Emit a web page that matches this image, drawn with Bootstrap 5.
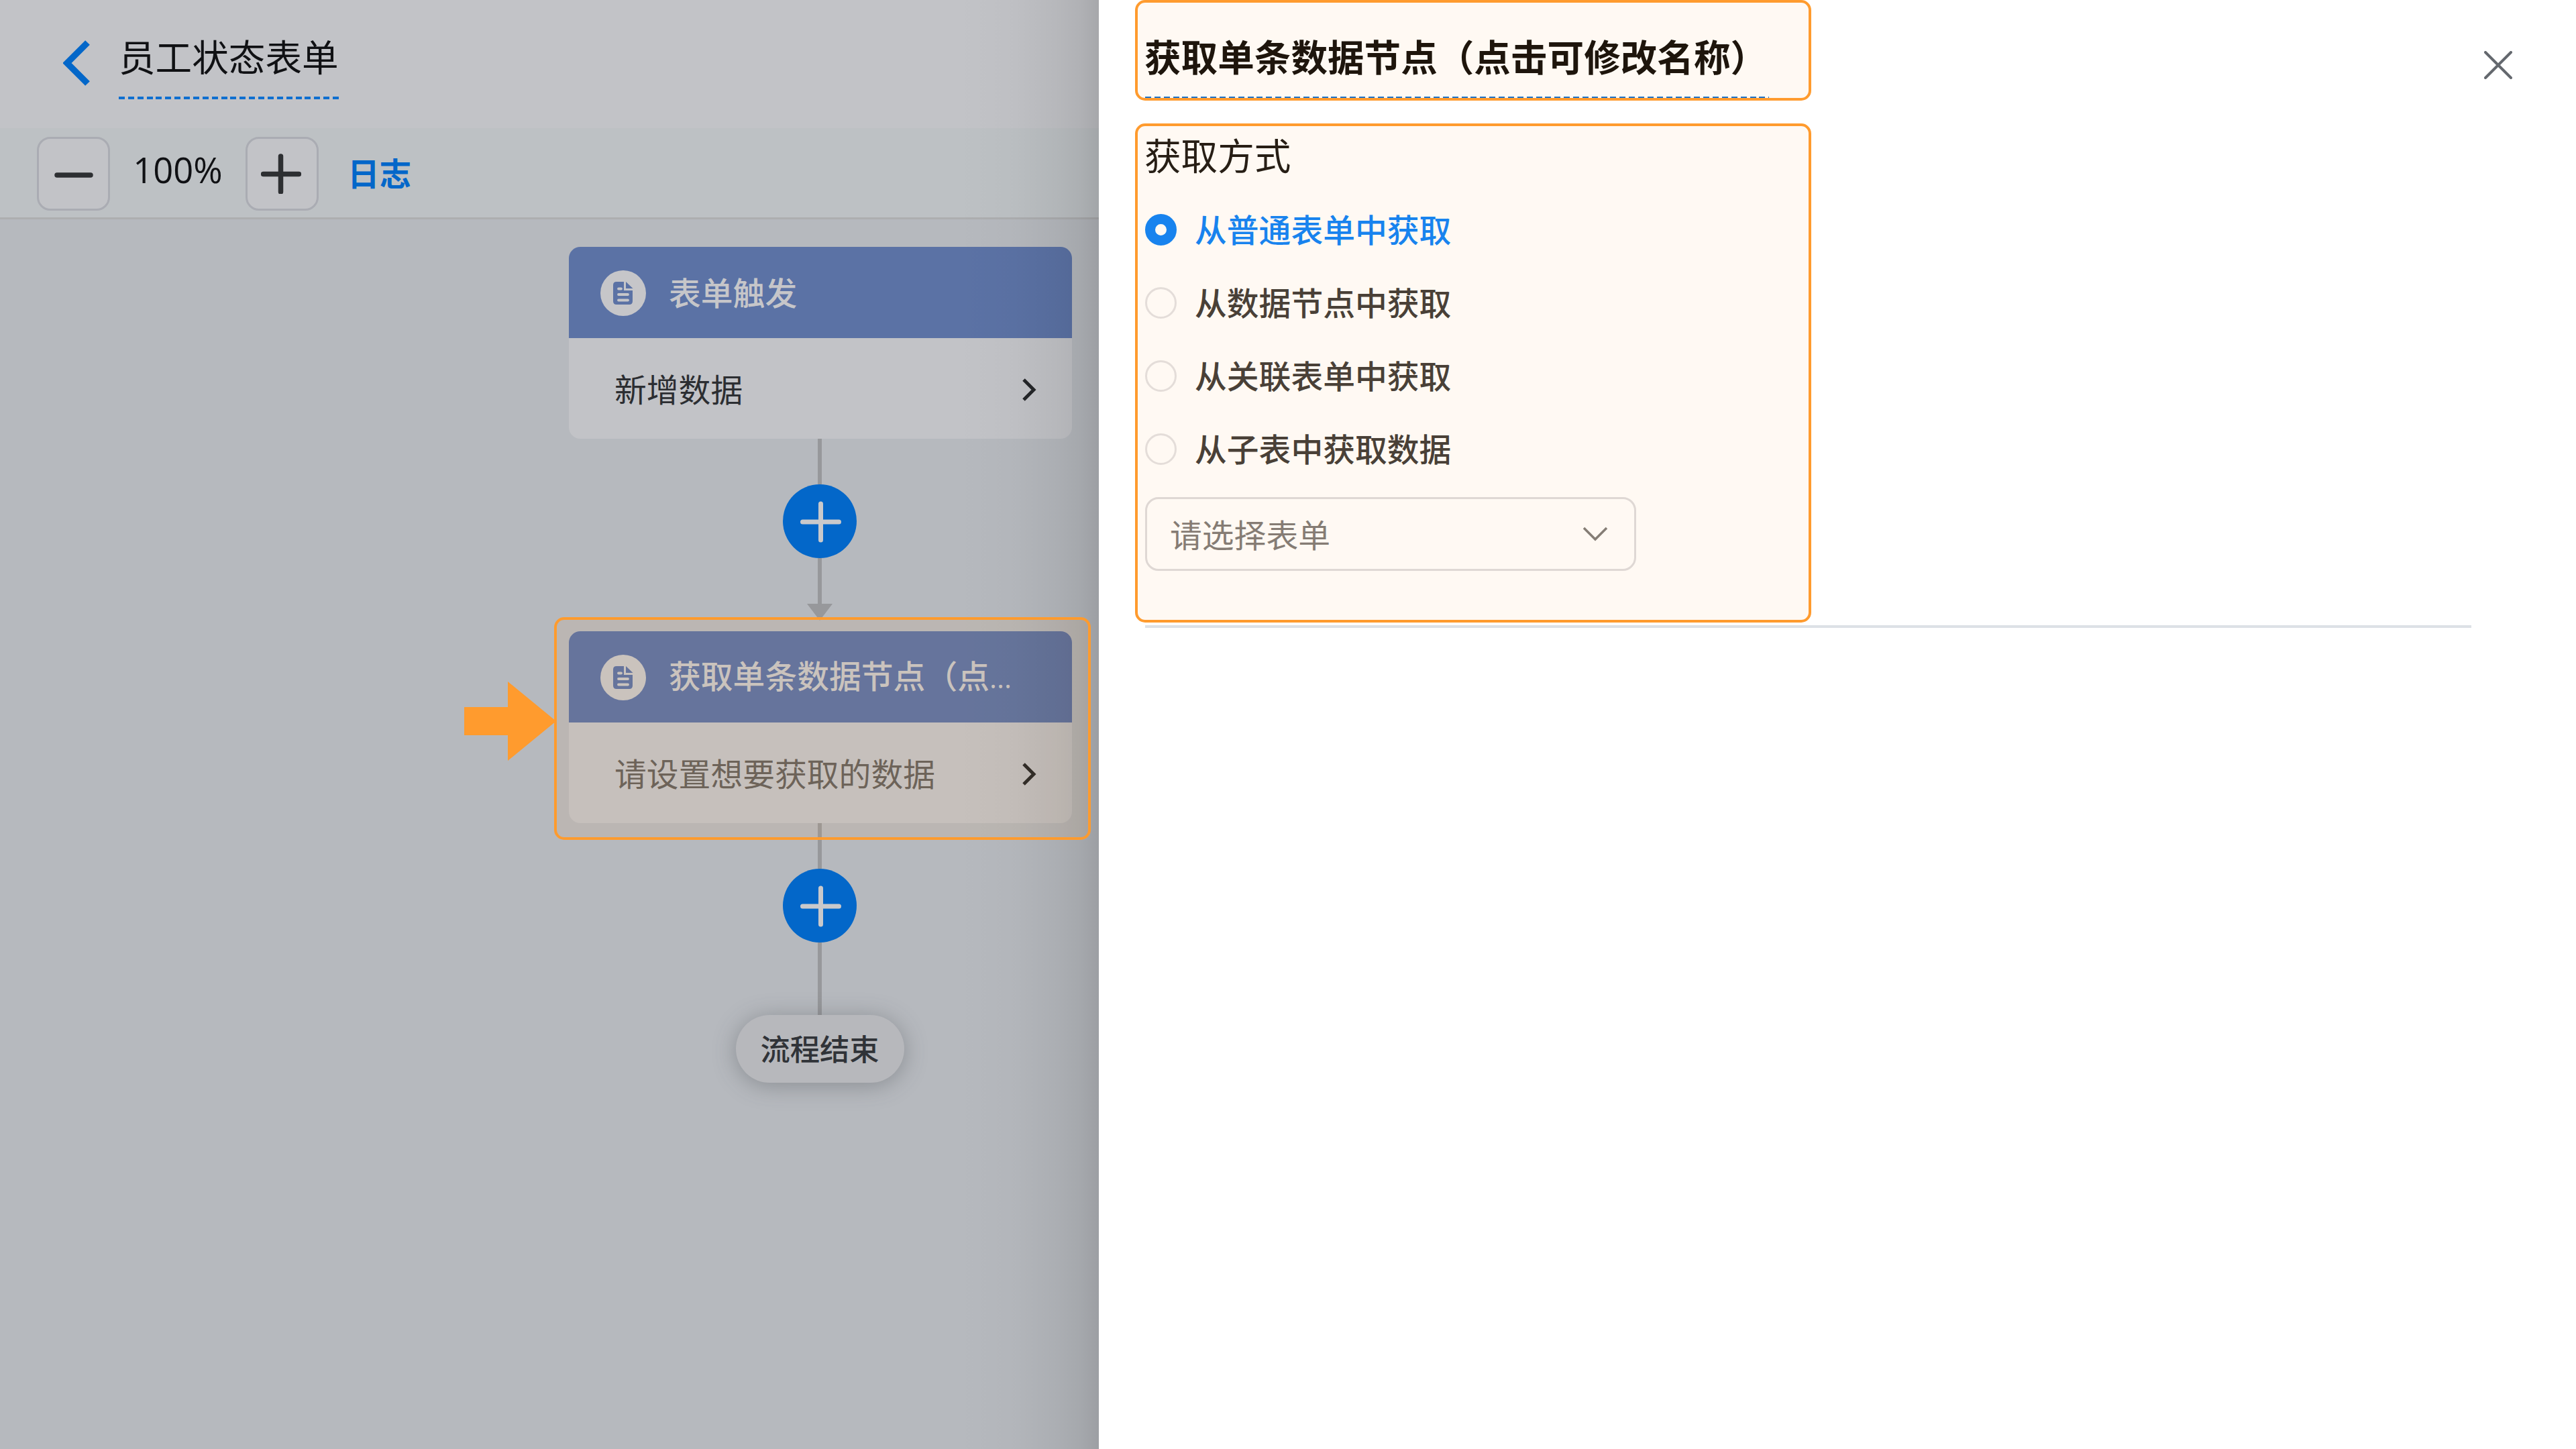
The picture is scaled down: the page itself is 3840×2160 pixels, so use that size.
<!DOCTYPE html>
<html lang="zh-CN">
<head>
<meta charset="utf-8">
<title>员工状态表单</title>
<link href="https://cdn.jsdelivr.net/npm/bootstrap@5.3.0/dist/css/bootstrap.min.css" rel="stylesheet">
<style>
  body { font-family: "Noto Sans CJK SC", sans-serif; font-size: 48px; line-height: 1.5; color: #1a1714; background: #fff; }
  svg { display: block; flex: none; }
  .workspace { width: 3840px; height: 2160px; }
  .flow-pane { width: 1638px; background: #b6b9be; }
  .flow-pane::after { content: ""; position: absolute; top: 0; right: 0; bottom: 0; width: 210px; pointer-events: none;
    background: linear-gradient(to right, rgba(0,0,0,0), rgba(0,0,0,.02) 40%, rgba(0,0,0,.06) 70%, rgba(0,0,0,.09) 86%, rgba(0,0,0,.14)); }
  .top-head { height: 191px; background: #c2c3c7; padding: 43px 0 0 94px; }
  .editable { font-size: 54.6px; line-height: 80px; height: 105px; padding-bottom: 25px;
    background: repeating-linear-gradient(to right, #0f6fd0 0 9px, transparent 9px 13.87px) left bottom / 100% 4px no-repeat; }
  .top-head .editable { width: 328px; margin-left: 43px; color: #101114; }
  .tool-row { height: 136px; background: #bdc1c4; border-bottom: 3px solid #adaeb0; padding: 13px 0 0 55px; }
  .zoom-btn { width: 109px; height: 110px; border: 3px solid #aaacb3; border-radius: 20px; background: #c2c3c7; padding: 0; }
  .zoom-value { width: 202px; font-family: "Open Sans", sans-serif; font-size: 52.5px; line-height: 98px; color: #101114; }
  .zoom-in-icon { margin-left: -3px; }
  .log-link { margin-left: 43px; font-size: 47.6px; line-height: 106px; font-weight: 700; color: #0367c9; text-decoration: none; }
  .flow-col { width: 750px; margin-left: 848px; padding-top: 41px; }
  .node { width: 750px; height: 286px; border: 0; border-radius: 17px; background: #c2c3c7; overflow: hidden; }
  .node-head { height: 136px; background: #5b72a5; color: #c6c6c9; padding: 2px 0 0 47px; font-weight: 500; }
  .node-head span { margin-left: 34px; line-height: 128px; margin-top: -4px; font-size: 47.8px; }
  .node-head i { font-family: "Open Sans", sans-serif; font-style: normal; font-size: 42px; }
  .node-body { height: 150px; padding: 0 50px 0 68px; color: #2c2e32; line-height: 146px; font-size: 47.8px; }
  .node-body svg { margin-top: 4px; }
  .node-body.hint { color: #625f5d; }
  .wire { width: 6px; background: #97989b; margin-left: -2px; }
  .add-node { width: 110px; height: 110px; border-radius: 50%; background: #0367c9; margin-left: -2px; }
  .arrow-tip { width: 0; height: 0; border: solid transparent; border-width: 25px 19px 0; border-top-color: #97989b; margin-left: -2px; }
  .flow-end { width: 251px; height: 101px; border-radius: 51px; background: #b7b8bc; color: #303338; font-size: 44.3px; font-weight: 500; line-height: 99px; margin-left: -2px; box-shadow: 0 4px 34px rgba(70,74,80,.4); }
  .callout { position: absolute; border: 4px solid #ff9b2e; border-radius: 15px; background: rgba(255,155,46,.06); pointer-events: none; }
  .callout-node { left: 826px; top: 920px; width: 800px; height: 332px; background: rgba(255,155,46,.07); }
  .callout-name { left: 54px; top: 0; width: 1008px; height: 150px; }
  .callout-mode { left: 54px; top: 184px; width: 1008px; height: 744px; }
  .pointer { position: absolute; left: 692px; top: 1016px; }
  .side-panel { background: #fff; padding: 43px 95px 0 69px; }
  .close-x { margin-top: 33px; }
  .panel-name { font-weight: 700; width: 930px; color: #100d0a; white-space: nowrap; text-indent: -1px; }
  .mode-label { font-size: 54.6px; line-height: 80px; margin-top: 42px; text-indent: -1px; }
  .mode-list { padding-top: 18px; }
  .mode-item { height: 109px; color: #3e3b38; font-weight: 500; font-size: 47.8px; }
  .mode-item span { line-height: 106px; margin: -3px 0 0 27px; }
  .mode-item.on { color: #0a82fa; }
  .ring { width: 47px; height: 47px; border: 3px solid #e3e2e4; border-radius: 50%; }
  .on .ring { border: 15.5px solid #0a82fa; background: #fff; }
  .pick-form { width: 732px; height: 110px; border: 3px solid #dddcdf; border-radius: 20px; margin-top: 17px; padding: 0 39px 0 34px; color: #7e7b79; line-height: 98px; font-size: 47.8px; }
  .split { height: 4px; background: #dde1e6; margin: 81px 61px 0 0; }
</style>
</head>
<body class="overflow-hidden">
<svg width="0" height="0" class="position-absolute">
  <symbol id="doc" viewBox="0 0 68 68">
    <circle cx="34" cy="34" r="34" fill="#c6c6c9"/>
    <path d="M24 17h11v13h13v16q0 5-5 5H24q-5 0-5-5V22q0-5 5-5Z" fill="#5b72a5"/>
    <path d="M38 17v10H48.500Z" fill="#5b72a5"/>
    <path d="M27 27.500h4M27 36h14M27 44.500h14" stroke="#c6c6c9" stroke-width="3.800" stroke-linecap="round"/>
  </symbol>
  <symbol id="next" viewBox="0 0 26 38">
    <path d="M4 4 19 19 4 34" fill="none" stroke="#242629" stroke-width="5"/>
  </symbol>
  <symbol id="add" viewBox="0 0 110 110">
    <path d="M29.500 56h54M56.500 29v54" stroke="#c9c9cb" stroke-width="7" stroke-linecap="round"/>
  </symbol>
</svg>
<div class="workspace d-flex">
  <div class="flow-pane position-relative d-flex flex-column flex-shrink-0">
    <header class="top-head d-flex align-items-start">
      <svg width="40" height="70" viewBox="0 0 40 70" class="mt-3"><path d="M36.500 4.500 6 35 36.500 65.500" fill="none" stroke="#0367c9" stroke-width="9.500"/></svg>
      <div class="editable">员工状态表单</div>
    </header>
    <div class="tool-row d-flex align-items-start">
      <button class="zoom-btn d-flex align-items-center justify-content-center" type="button">
        <svg width="60" height="60"><path d="M5 32h50" stroke="#2d2f32" stroke-width="7.500" stroke-linecap="round"/></svg>
      </button>
      <div class="zoom-value text-center">100%</div>
      <button class="zoom-btn d-flex align-items-center justify-content-center" type="button">
        <svg class="zoom-in-icon" width="60" height="60"><path d="M3.500 30.500h53M29.500 4v53" stroke="#2d2f32" stroke-width="7.500" stroke-linecap="round"/></svg>
      </button>
      <a class="log-link" href="#">日志</a>
    </div>
    <main class="flow-col d-flex flex-column align-items-center">
      <div class="node card">
        <div class="node-head d-flex align-items-center"><svg width="68" height="68"><use href="#doc"/></svg><span>表单触发</span></div>
        <div class="node-body d-flex align-items-center justify-content-between"><div>新增数据</div><svg width="26" height="38"><use href="#next"/></svg></div>
      </div>
      <div class="wire" style="height:68px"></div>
      <div class="add-node"><svg width="110" height="110"><use href="#add"/></svg></div>
      <div class="wire" style="height:68px"></div>
      <div class="arrow-tip mb-3"></div>
      <div class="node card">
        <div class="node-head d-flex align-items-center"><svg width="68" height="68"><use href="#doc"/></svg><span class="text-nowrap">获取单条数据节点（点<i>...</i></span></div>
        <div class="node-body hint d-flex align-items-center justify-content-between"><div>请设置想要获取的数据</div><svg width="26" height="38"><use href="#next"/></svg></div>
      </div>
      <div class="wire" style="height:68px"></div>
      <div class="add-node"><svg width="110" height="110"><use href="#add"/></svg></div>
      <div class="wire" style="height:108px"></div>
      <div class="flow-end text-center">流程结束</div>
    </main>
    <div class="callout callout-node z-1"></div>
    <svg class="pointer z-1" width="137" height="118" viewBox="0 0 137 118"><path d="M0 38h65V0l72 59-72 59V80H0Z" fill="#ff9b2e"/></svg>
  </div>
  <section class="side-panel position-relative flex-grow-1">
    <div class="d-flex justify-content-between align-items-start">
      <div class="editable panel-name">获取单条数据节点（点击可修改名称）</div>
      <svg class="close-x" width="42" height="42"><path d="M2 2l38 38M40 2 2 40" stroke="#64686e" stroke-width="4" stroke-linecap="round"/></svg>
    </div>
    <div class="mode-label">获取方式</div>
    <div class="mode-list d-flex flex-column">
      <div class="mode-item on d-flex align-items-center"><div class="ring"></div><span>从普通表单中获取</span></div>
      <div class="mode-item d-flex align-items-center"><div class="ring"></div><span>从数据节点中获取</span></div>
      <div class="mode-item d-flex align-items-center"><div class="ring"></div><span>从关联表单中获取</span></div>
      <div class="mode-item d-flex align-items-center"><div class="ring"></div><span>从子表中获取数据</span></div>
    </div>
    <div class="pick-form d-flex align-items-center justify-content-between">
      <div>请选择表单</div>
      <svg width="38" height="22"><path d="M2 2l17 17L36 2" fill="none" stroke="#7e7c7a" stroke-width="3.500"/></svg>
    </div>
    <div class="split"></div>
    <div class="callout callout-name"></div>
    <div class="callout callout-mode"></div>
  </section>
</div>
<script src="https://cdn.jsdelivr.net/npm/bootstrap@5.3.0/dist/js/bootstrap.bundle.min.js"></script>
</body>
</html>
